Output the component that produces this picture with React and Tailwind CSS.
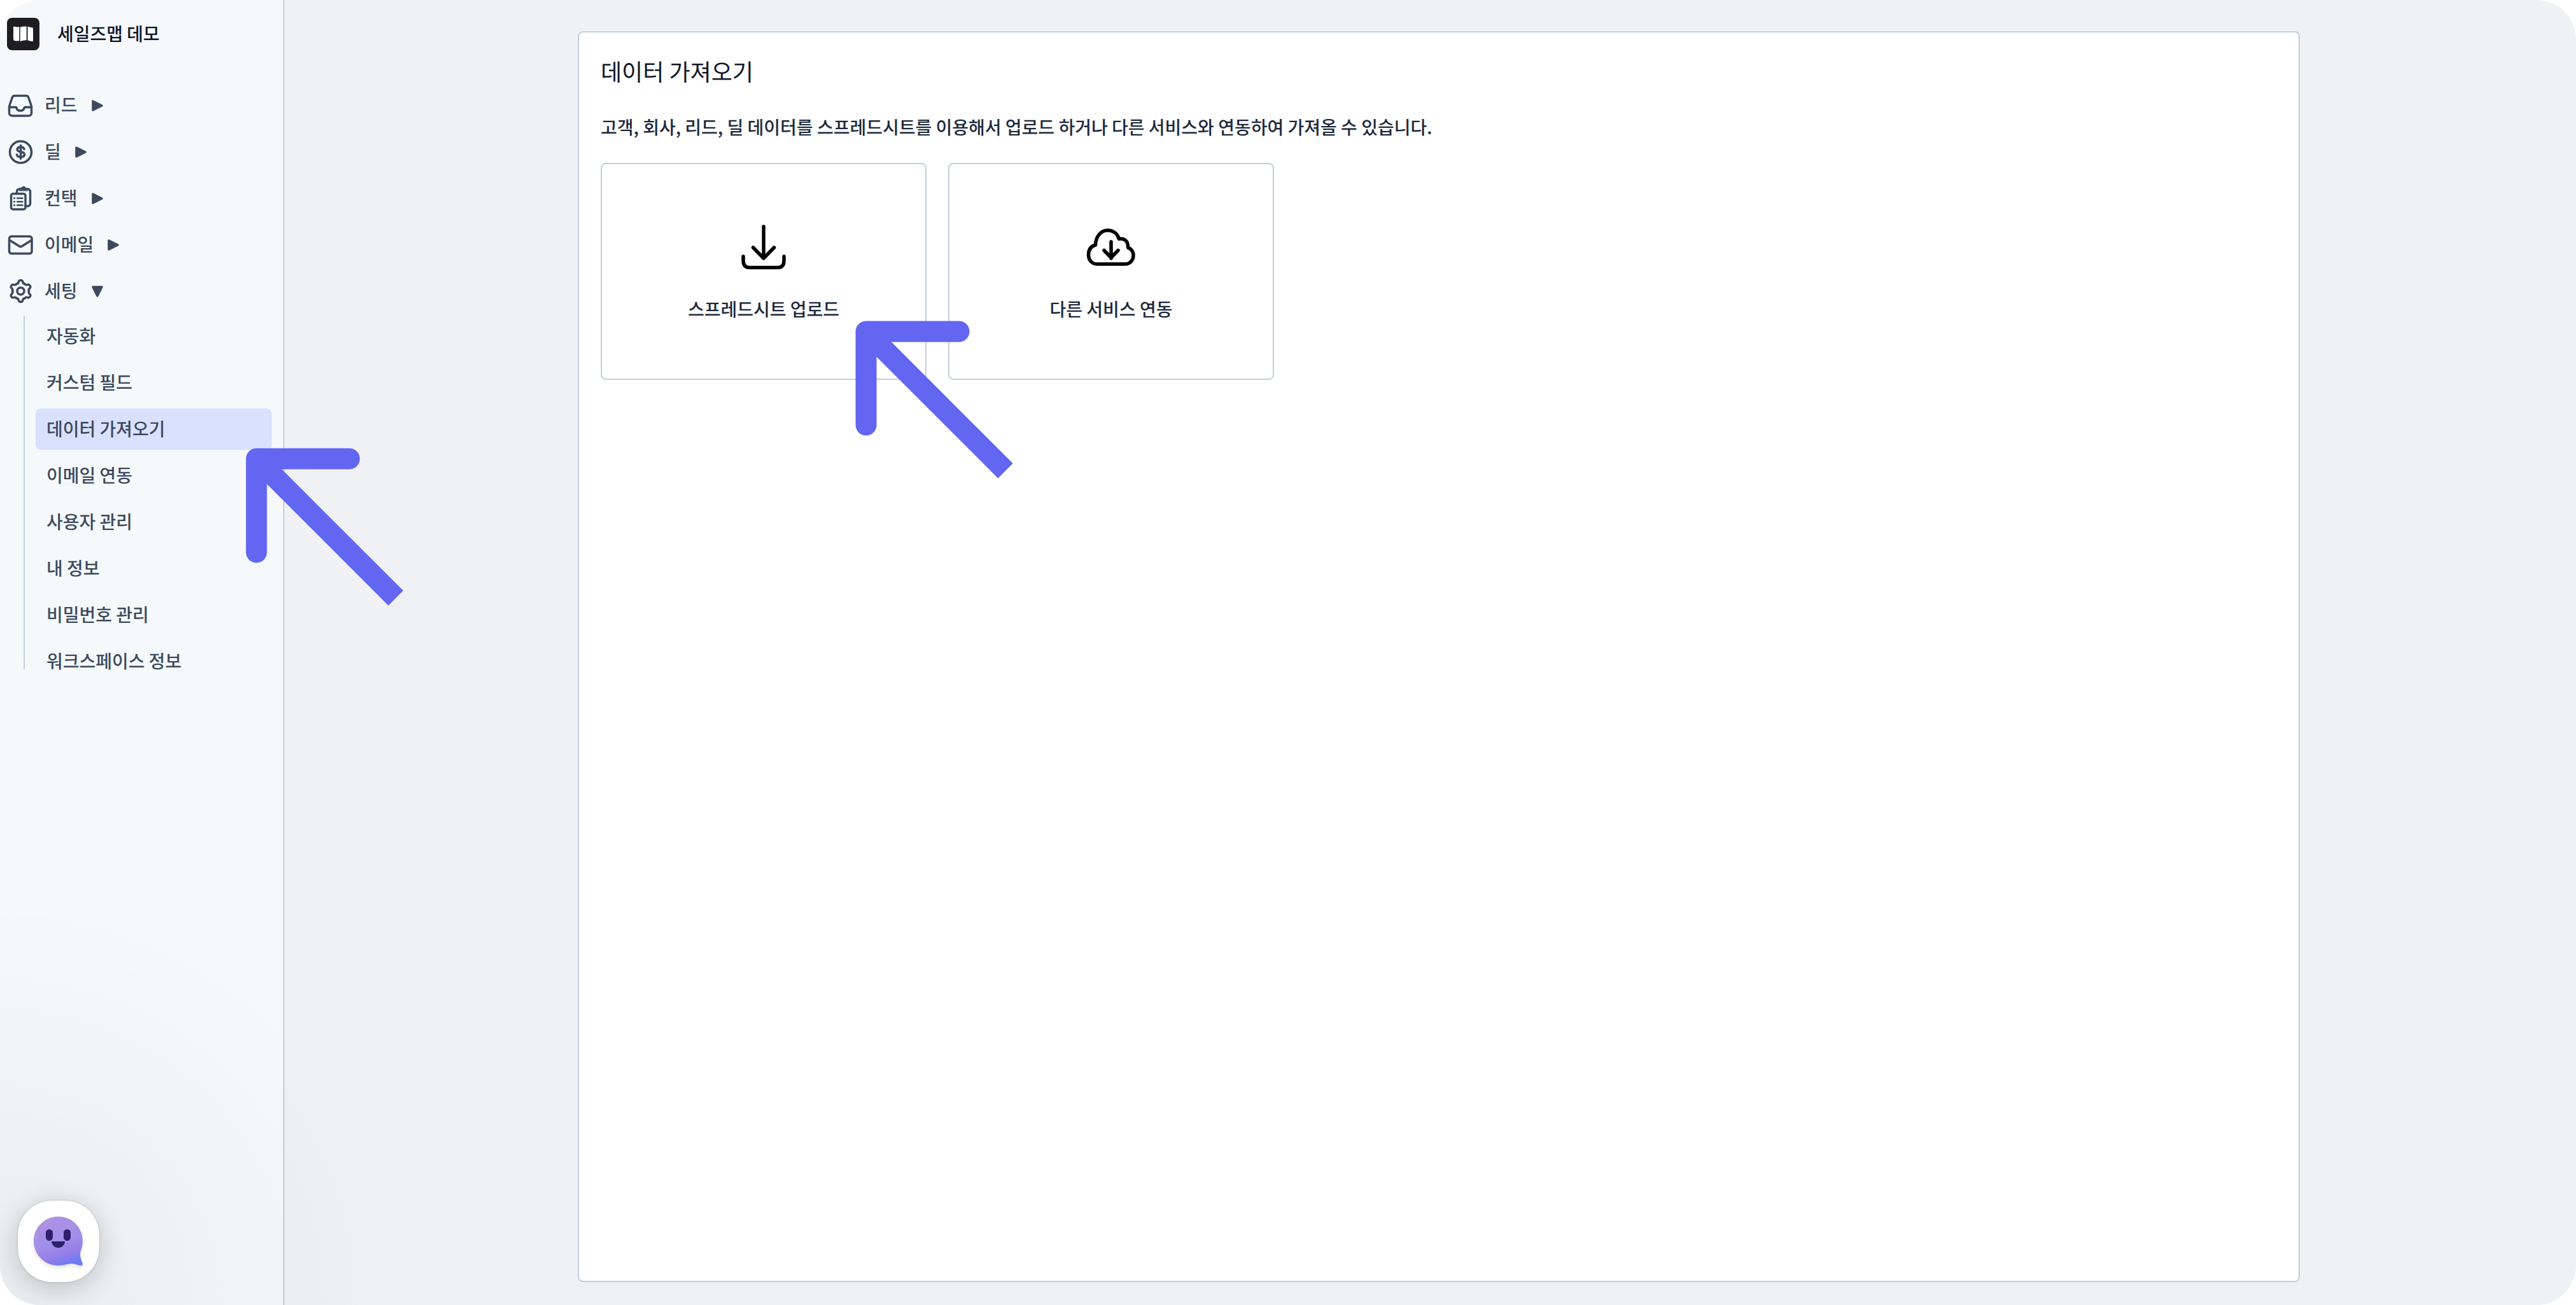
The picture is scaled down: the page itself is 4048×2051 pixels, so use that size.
import React from "react";

const stroke = {
  fill: "none",
  stroke: "currentColor",
  strokeLinecap: "round",
  strokeLinejoin: "round",
};

function Logo() {
  return (
    <svg viewBox="0 0 51 51" className="size-[51px] shrink-0" aria-hidden="true">
      <rect width="51" height="51" rx="8" fill="#1f1d22" />
      <path d="M10 13.500q4.500 1.300 9.300.8v21.700q-4.500.8-7.300 0-2-.5-2-2.500z" fill="#fff" />
      <path d="M20.700 14.800q5-1.800 10-1v21.500q-4.500-.5-10 1.700z" fill="#fff" />
      <path d="M32.500 13.500q4 1.800 6.500 1.800 2 .2 2 2V37q-4.500.2-8.500-1.700z" fill="#fff" />
    </svg>
  );
}

function TrayIcon() {
  return (
    <svg viewBox="0 0 40 40" className="size-10" strokeWidth="3.500" {...stroke} aria-hidden="true">
      <path d="M11 4.500h18a4 4 0 0 1 3.800 2.800L37.500 21v10.500a4.500 4.500 0 0 1-4.500 4.500H7a4.500 4.500 0 0 1-4.500-4.500V21L7.200 7.300A4 4 0 0 1 11 4.500z" />
      <path d="M3 22.500h9.500q1.300 0 1.600 1.500 1 4 5.900 4t5.900-4q.3-1.500 1.600-1.500H37" />
    </svg>
  );
}

function DollarIcon() {
  return (
    <svg viewBox="0 0 40 40" className="size-10" strokeWidth="3.500" {...stroke} aria-hidden="true">
      <circle cx="20.500" cy="20" r="17" />
      <path d="M26 15.500q-.8-3.500-5.500-3.500T15 15.500q0 3 5.500 4t6 4.200q0 4-6 4t-6-3.700M20.500 9.500v21" />
    </svg>
  );
}

function ClipboardIcon() {
  return (
    <svg viewBox="0 0 40 40" className="size-10" strokeWidth="3.500" {...stroke} aria-hidden="true">
      <rect x="5.500" y="12.500" width="22.500" height="24.500" rx="3" />
      <path d="M14.500 12V9a4 4 0 0 1 4-4h13a4 4 0 0 1 4 4v19a4 4 0 0 1-4 4H28.500" />
      <path d="M18.500 7.500q-.5-3 3-4 1-2.500 3.500-2.500t3.500 2.500q3.500 1 3 4z" fill="currentColor" strokeWidth="1" />
      <path d="M15 19.500h8.500M15 25h8.500M15 30.500h8.500M10 19.500h1M10 25h1M10 30.500h1" strokeWidth="2.500" />
    </svg>
  );
}

function MailIcon() {
  return (
    <svg viewBox="0 0 40 40" className="size-10" strokeWidth="3.500" {...stroke} aria-hidden="true">
      <rect x="2.500" y="6.500" width="35.500" height="27" rx="3.500" />
      <path d="m3 12.500 15.500 9.500q2 1.300 4 0L37.500 12.500" />
    </svg>
  );
}

function GearIcon() {
  return (
    <svg viewBox="0 0 40 40" className="size-10" strokeWidth="3.500" {...stroke} aria-hidden="true">
      {[0, 60, 120, 180, 240, 300].map((angle) => (
        <path
          key={angle}
          transform={`rotate(${angle} 20.5 19.5)`}
          d="M14 8.200q2.800-.2 3.200-3 .4-2.700 3.300-2.700t3.300 2.700q.4 2.800 3.200 3"
        />
      ))}
      <circle cx="20.500" cy="19.500" r="5.500" />
    </svg>
  );
}

function Caret({ open }) {
  return (
    <svg
      viewBox="0 0 18 18"
      className={open ? "size-[18px] rotate-90" : "size-[18px]"}
      aria-hidden="true"
    >
      <path
        d="M2 2v14l14-7z"
        fill="currentColor"
        stroke="currentColor"
        strokeWidth="3.500"
        strokeLinejoin="round"
      />
    </svg>
  );
}

function DownloadIcon() {
  return (
    <svg viewBox="0 0 80 80" className="size-20" strokeWidth="5.500" {...stroke} aria-hidden="true">
      <path d="M40 7v49M23.500 40 40 57l16.500-17" />
      <path d="M8 54v6.500q0 11 10 11h44q10 0 10-11V54" />
    </svg>
  );
}

function CloudIcon() {
  return (
    <svg viewBox="0 0 80 80" className="size-20" strokeWidth="5.500" {...stroke} aria-hidden="true">
      <path d="M18 66C9 66 4.500 58.500 4.500 51.500 4.500 43 8.500 38 15.500 36c0-12 8-23 19-23 9 0 15.500 5.500 18 13.500 9-1.500 14.500 4 14 13.500 5.500 2.500 8.500 7.500 8.500 12.500C75 60 69.500 66 62 66z" />
      <path d="M40 31v26M29 44.500l11 11.500 11-11.500" />
    </svg>
  );
}

function ChatFace() {
  return (
    <svg viewBox="0 0 78 78" className="size-[78px] drop-shadow-md" aria-hidden="true">
      <defs>
        <linearGradient id="face" x1="0.250" y1="0" x2="0.600" y2="1">
          <stop offset="0" stopColor="#b192e0" />
          <stop offset="0.550" stopColor="#a08fea" />
          <stop offset="0.800" stopColor="#937fe8" />
          <stop offset="1" stopColor="#6f7af2" />
        </linearGradient>
      </defs>
      <path
        d="M39 0C60 0 77 17 77 38.500c0 9-3.500 14.500-4 20-.3 5 1.500 9 3.800 15 .8 2.500-1 4-3.800 3.500-4-.8-8.500-3-14-3C53 74 48 77 39 77 17 77 0 60 0 38.500S17 0 39 0z"
        fill="url(#face)"
      />
      <rect x="19" y="20" width="11" height="18" rx="5.500" fill="#2e206b" />
      <rect x="47" y="20" width="11" height="18" rx="5.500" fill="#2e206b" />
      <path d="M29 39h19q1.500 0 1 1.500Q46.500 49 38.500 49T28 40.500q-.5-1.500 1-1.500z" fill="#2e206b" />
    </svg>
  );
}

function PointerArrow({ className }) {
  return (
    <svg
      viewBox="0 0 250 250"
      className={"pointer-events-none absolute size-[250px] text-[#6366f1] " + className}
      strokeWidth="33"
      fill="none"
      stroke="currentColor"
      strokeLinejoin="round"
      aria-hidden="true"
    >
      <path d="M163 17H17v147" strokeLinecap="round" />
      <path d="m17 17 219 219" />
    </svg>
  );
}

const sections = [
  { label: "리드", Icon: TrayIcon },
  { label: "딜", Icon: DollarIcon },
  { label: "컨택", Icon: ClipboardIcon },
  { label: "이메일", Icon: MailIcon },
  { label: "세팅", Icon: GearIcon, open: true },
];

const settings = [
  "자동화",
  "커스텀 필드",
  "데이터 가져오기",
  "이메일 연동",
  "사용자 관리",
  "내 정보",
  "비밀번호 관리",
  "워크스페이스 정보",
];

const sources = [
  { label: "스프레드시트 업로드", Icon: DownloadIcon },
  { label: "다른 서비스 연동", Icon: CloudIcon },
];

function Sidebar() {
  return (
    <aside className="w-[447px] shrink-0 border-r-2 border-[#c4cfde] bg-[#f5f9fc] pt-7 text-[#3d4a5e]">
      <div className="flex items-center gap-7 pl-[11px] text-slate-900">
        <Logo />
        <span className="pb-1">세일즈맵 데모</span>
      </div>
      <nav className="mt-[54px]">
        <ul className="flex flex-col gap-2">
          {sections.map(({ label, Icon, open }) => (
            <li key={label}>
              <button
                type="button"
                aria-expanded={Boolean(open)}
                className="flex h-[65px] items-center pl-3"
              >
                <Icon />
                <span className="ml-[18px] mr-[22px] pb-1">{label}</span>
                <Caret open={open} />
              </button>
            </li>
          ))}
        </ul>
        <div className="mt-1.5 flex items-start">
          <div className="ml-[37px] mb-5 w-0.5 self-stretch bg-[#c4cfde]" />
          <ul className="ml-[17px] mr-[18px] flex flex-1 flex-col gap-2">
            {settings.map((label) => (
              <li key={label}>
                <a
                  href="#"
                  aria-current={label === "데이터 가져오기" ? "page" : undefined}
                  className="flex h-[65px] items-center rounded-lg px-[17px] pb-1 aria-[current=page]:bg-[#dae1fe]"
                >
                  {label}
                </a>
              </li>
            ))}
          </ul>
        </div>
      </nav>
    </aside>
  );
}

export default function App() {
  return (
    <div className="bg-white">
      <div className="relative flex min-h-screen overflow-hidden rounded-[62px] bg-[#f0f1f5] font-['Noto_Sans_CJK_KR',sans-serif] text-[28px] leading-10 font-medium">
        <Sidebar />
        <main className="flex min-w-0 flex-1 pt-[49px] pr-[434px] pb-9 pl-[461px]">
          <section className="flex-1 rounded-lg border-2 border-[#c4cfde] bg-white px-[34px] pt-10 text-slate-800">
            <h1 className="text-[36px] font-normal text-slate-900">데이터 가져오기</h1>
            <p className="mt-12">
              고객, 회사, 리드, 딜 데이터를 스프레드시트를 이용해서 업로드 하거나 다른 서비스와 연동하여 가져올 수
              있습니다.
            </p>
            <div className="mt-[37px] flex gap-[34px]">
              {sources.map(({ label, Icon }) => (
                <button
                  key={label}
                  type="button"
                  className="flex h-[341px] w-[512px] flex-col items-center justify-center gap-9 rounded-lg border-2 border-[#c4cfde] bg-white"
                >
                  <span className="text-black">
                    <Icon />
                  </span>
                  <span>{label}</span>
                </button>
              ))}
            </div>
          </section>
        </main>

        <div className="pointer-events-none absolute bottom-0 left-0 size-[640px] bg-[radial-gradient(circle_at_bottom_left,rgba(0,0,0,0.050),transparent_640px)]" />
        <PointerArrow className="left-[386px] top-[704px]" />
        <PointerArrow className="left-[1344px] top-[504px]" />

        <button
          type="button"
          aria-label="채팅 상담 열기"
          className="absolute bottom-9 left-7 flex size-32 items-center justify-center rounded-[54px] bg-white shadow-[0_0_3px_rgba(0,0,0,0.200),0_8px_40px_rgba(0,0,0,0.200)]"
        >
          <ChatFace />
        </button>
      </div>
    </div>
  );
}
